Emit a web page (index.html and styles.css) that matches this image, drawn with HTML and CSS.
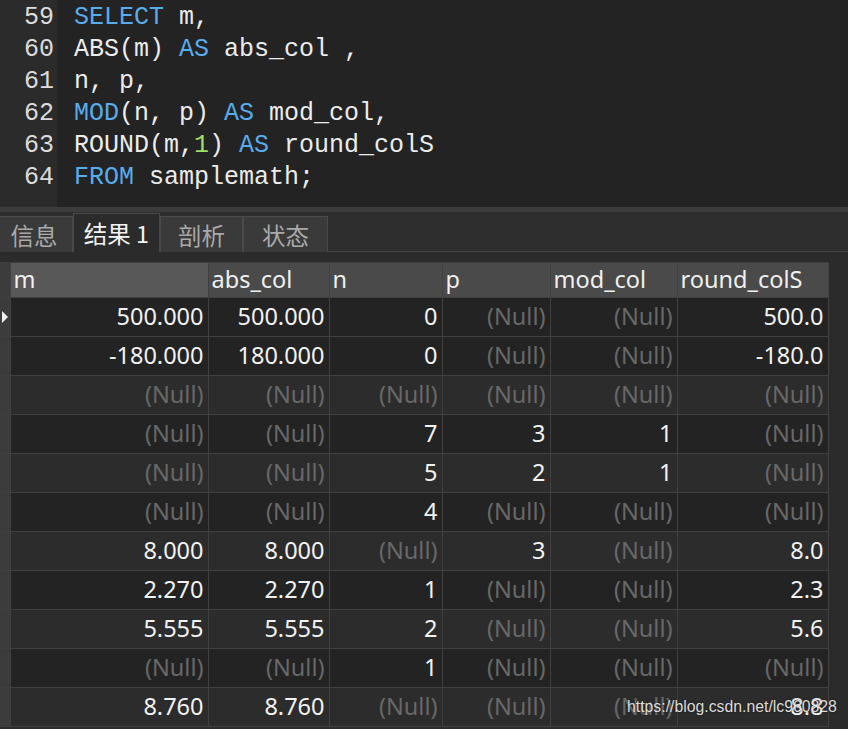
FILE: index.html
```html
<!DOCTYPE html>
<html>
<head>
<meta charset="utf-8">
<link rel="stylesheet" href="styles.css">
</head>
<body>
<div class="app">
  <div class="editor">
    <div class="gutter">
      <div class="ln">59</div><div class="ln">60</div><div class="ln">61</div>
      <div class="ln">62</div><div class="ln">63</div><div class="ln">64</div>
    </div>
    <div class="code">
      <div class="line"><span class="kw">SELECT</span> m,</div>
      <div class="line">ABS(m) <span class="kw">AS</span> abs_col ,</div>
      <div class="line">n, p,</div>
      <div class="line"><span class="kw">MOD</span>(n, p) <span class="kw">AS</span> mod_col,</div>
      <div class="line">ROUND(m,<span class="num">1</span>) <span class="kw">AS</span> round_colS</div>
      <div class="line"><span class="kw">FROM</span> samplemath;</div>
    </div>
  </div>
  <div class="splitter"></div>
  <div class="tabbar">
    <div class="tab">信息</div>
    <div class="tab active">结果 1</div>
    <div class="tab">剖析</div>
    <div class="tab">状态</div>
  </div>
  <div class="gridarea">
    <table class="grid">
      <colgroup>
        <col class="c-rh"><col class="c-m"><col class="c-abs"><col class="c-n"><col class="c-p"><col class="c-mod"><col class="c-round">
      </colgroup>
      <thead>
        <tr><th class="rh"></th><th class="sel">m</th><th>abs_col</th><th>n</th><th>p</th><th>mod_col</th><th>round_colS</th></tr>
      </thead>
      <tbody>
        <tr class="odd cur"><td class="rh"><span class="tri"></span></td><td>500.000</td><td>500.000</td><td>0</td><td class="nl">(Null)</td><td class="nl">(Null)</td><td>500.0</td></tr>
        <tr class="odd"><td class="rh"></td><td>-180.000</td><td>180.000</td><td>0</td><td class="nl">(Null)</td><td class="nl">(Null)</td><td>-180.0</td></tr>
        <tr class="even"><td class="rh"></td><td class="nl">(Null)</td><td class="nl">(Null)</td><td class="nl">(Null)</td><td class="nl">(Null)</td><td class="nl">(Null)</td><td class="nl">(Null)</td></tr>
        <tr class="odd"><td class="rh"></td><td class="nl">(Null)</td><td class="nl">(Null)</td><td>7</td><td>3</td><td>1</td><td class="nl">(Null)</td></tr>
        <tr class="even"><td class="rh"></td><td class="nl">(Null)</td><td class="nl">(Null)</td><td>5</td><td>2</td><td>1</td><td class="nl">(Null)</td></tr>
        <tr class="odd"><td class="rh"></td><td class="nl">(Null)</td><td class="nl">(Null)</td><td>4</td><td class="nl">(Null)</td><td class="nl">(Null)</td><td class="nl">(Null)</td></tr>
        <tr class="even"><td class="rh"></td><td>8.000</td><td>8.000</td><td class="nl">(Null)</td><td>3</td><td class="nl">(Null)</td><td>8.0</td></tr>
        <tr class="odd"><td class="rh"></td><td>2.270</td><td>2.270</td><td>1</td><td class="nl">(Null)</td><td class="nl">(Null)</td><td>2.3</td></tr>
        <tr class="even"><td class="rh"></td><td>5.555</td><td>5.555</td><td>2</td><td class="nl">(Null)</td><td class="nl">(Null)</td><td>5.6</td></tr>
        <tr class="odd"><td class="rh"></td><td class="nl">(Null)</td><td class="nl">(Null)</td><td>1</td><td class="nl">(Null)</td><td class="nl">(Null)</td><td class="nl">(Null)</td></tr>
        <tr class="even"><td class="rh"></td><td>8.760</td><td>8.760</td><td class="nl">(Null)</td><td class="nl">(Null)</td><td class="nl">(Null)</td><td>8.8</td></tr>
      </tbody>
    </table>
  </div>
  <div class="watermark">https://blog.csdn.net/lc960828</div>
</div>
</body>
</html>
```
FILE: styles.css
```css
html, body {
  margin: 0;
  padding: 0;
}
body {
  background: #2b2b2b;
  width: 848px;
  height: 729px;
  overflow: hidden;
}
.app {
  position: relative;
  width: 848px;
  height: 729px;
  display: flex;
  flex-direction: column;
  background: #2b2b2b;
}
.editor {
  height: 207px;
  display: flex;
  font-family: "Liberation Mono", "DejaVu Sans Mono", monospace;
  font-size: 25px;
  line-height: 32px;
}
.gutter {
  width: 57px;
  box-sizing: border-box;
  padding-top: 2px;
  padding-right: 3px;
  background: #2b2b2b;
  color: #dcdcdc;
  text-align: right;
}
.code {
  flex: 1;
  background: #232323;
  padding-top: 2px;
  padding-left: 17px;
  color: #ececec;
}
.line {
  height: 32px;
  white-space: pre;
}
.kw { color: #58acec; }
.num { color: #9fe067; }
.splitter {
  height: 5px;
  background: #3c3c3c;
}
.tabbar {
  height: 40px;
  box-sizing: border-box;
  background: #2e2e2e;
  border-bottom: 1px solid #454545;
  display: flex;
  align-items: flex-end;
  font-family: "Noto Sans CJK SC", "Noto Sans", sans-serif;
  font-size: 23.5px;
}
.tab {
  height: 36px;
  box-sizing: border-box;
  border: 1px solid #4a4a4a;
  border-bottom: none;
  background: #3a3a3a;
  color: #a9a9a9;
  display: flex;
  align-items: center;
  justify-content: center;
  margin-bottom: -1px;
}
.tab:nth-child(1) { width: 73px; border-left: none; padding-right: 4px; }
.tab:nth-child(2) { width: 87px; }
.tab:nth-child(3) { width: 83px; }
.tab:nth-child(4) { width: 85px; }
.tab.active {
  height: 39px;
  background: #2b2b2b;
  color: #f4f4f4;
  border-color: #484848;
}
.gridarea {
  padding-top: 10px;
  display: flex;
}
.grid {
  border-collapse: collapse;
  table-layout: fixed;
  width: 828px;
  font-family: "Noto Sans", "Open Sans", sans-serif;
  font-size: 23.5px;
}
.c-rh { width: 10px; }
.c-m { width: 198px; }
.c-abs { width: 121px; }
.c-n { width: 113px; }
.c-p { width: 108px; }
.c-mod { width: 127px; }
.c-round { width: 151px; }
.grid th, .grid td {
  border: 1px solid #404040;
  padding: 0;
  overflow: hidden;
  white-space: nowrap;
}
.grid th {
  height: 32px;
  background: #4a4a4a;
  color: #f0f0f0;
  font-weight: normal;
  text-align: left;
  padding-left: 3px;
  padding-bottom: 2px;
  line-height: 30px;
}
.grid th.sel { background: #585858; }
.grid th.rh { background: #3c3c3c; padding: 0; border-left: none; }
.grid td {
  height: 35px;
  text-align: right;
  padding-right: 4px;
  padding-bottom: 3px;
  color: #f2f2f2;
  line-height: 30px;
}
.grid tr.odd td { background: #232323; }
.grid tr.even td { background: #2c2c2c; }
.grid td.nl { color: #686868; }
.grid tr td.rh {
  background: #3c3c3c;
  padding: 0;
  position: relative;
  border-left: none;
}
.tri {
  position: absolute;
  left: 2px;
  top: 13px;
  width: 0;
  height: 0;
  border-top: 6px solid transparent;
  border-bottom: 6px solid transparent;
  border-left: 6px solid #f0f0f0;
}
.watermark {
  position: absolute;
  left: 627px;
  top: 698px;
  font-family: "Liberation Sans", Arial, sans-serif;
  font-size: 15.8px;
  color: rgba(255, 255, 255, 0.85);
  text-shadow: 0 0 2px rgba(0, 0, 0, 0.6);
}
```
